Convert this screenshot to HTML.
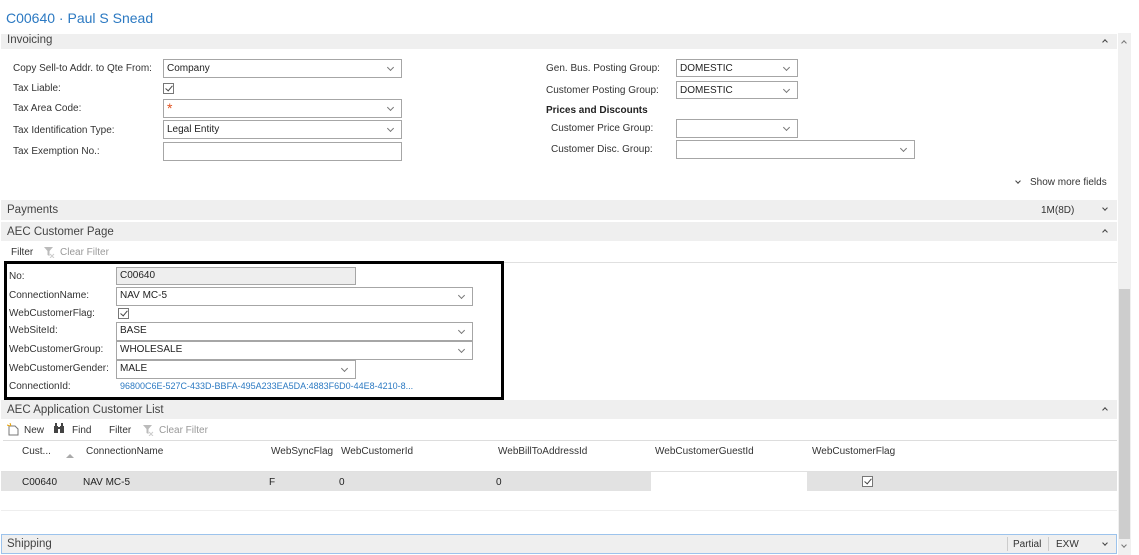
<!DOCTYPE html>
<html><head><meta charset="utf-8"><style>
*{margin:0;padding:0;box-sizing:border-box}
body{width:1139px;height:555px;background:#fff;font-family:"Liberation Sans",sans-serif;font-size:10px;color:#333;position:relative;overflow:hidden}
.a{position:absolute;white-space:nowrap}
.band{position:absolute;left:1px;width:1116px;background:#efefef;font-size:11.5px;color:#444;padding-left:6px}
.inp{position:absolute;border:1px solid #a6a6a6;background:#fff;height:19px;font-size:10px;padding:3px 3px;color:#222}
.dd::after{content:"";position:absolute;right:8px;top:5px;width:4px;height:4px;border-right:1px solid #777;border-bottom:1px solid #777;transform:rotate(45deg)}
.cb{position:absolute;width:11px;height:11px;border:1px solid #777;background:#fff}
.cb::after{content:"";position:absolute;left:3px;top:0px;width:3px;height:6px;border-right:1px solid #444;border-bottom:1px solid #444;transform:rotate(40deg)}
.lbl{position:absolute;font-size:10px;color:#333;white-space:nowrap}
.chev{position:absolute;width:5px;height:5px;border-left:1.5px solid #444;border-top:1.5px solid #444}
.up{transform:rotate(45deg)}.dn{transform:rotate(225deg)}
.hl{position:absolute;height:1px;background:#e0e0e0}
</style></head><body>
<div class="a" style="left:6px;top:10px;font-size:14px;color:#2b79c2">C00640 · Paul S Snead</div>

<div class="band" style="top:34px;height:15px;line-height:13px">Invoicing</div>
<div class="chev up" style="left:1103px;top:40px;width:4px;height:4px"></div>

<div class="lbl" style="left:13px;top:63px">Copy Sell-to Addr. to Qte From:</div>
<div class="inp dd" style="left:163px;top:59px;width:239px">Company</div>
<div class="lbl" style="left:13px;top:83px">Tax Liable:</div>
<div class="cb" style="left:163px;top:83px"></div>
<div class="lbl" style="left:13px;top:103px">Tax Area Code:</div>
<div class="inp dd" style="left:163px;top:99px;width:239px"><span style="color:#e0501e;font-size:14px;line-height:10px">*</span></div>
<div class="lbl" style="left:13px;top:125px">Tax Identification Type:</div>
<div class="inp dd" style="left:163px;top:120px;width:239px">Legal Entity</div>
<div class="lbl" style="left:13px;top:146px">Tax Exemption No.:</div>
<div class="inp" style="left:163px;top:142px;width:239px"></div>

<div class="lbl" style="left:546px;top:63px">Gen. Bus. Posting Group:</div>
<div class="inp dd" style="left:676px;top:59px;width:122px;height:18px;padding-top:3px">DOMESTIC</div>
<div class="lbl" style="left:546px;top:85px">Customer Posting Group:</div>
<div class="inp dd" style="left:676px;top:81px;width:122px;height:18px;padding-top:3px">DOMESTIC</div>
<div class="lbl" style="left:546px;top:105px;font-weight:bold;color:#222">Prices and Discounts</div>
<div class="lbl" style="left:551px;top:123px">Customer Price Group:</div>
<div class="inp dd" style="left:676px;top:119px;width:122px"></div>
<div class="lbl" style="left:551px;top:144px">Customer Disc. Group:</div>
<div class="inp dd" style="left:676px;top:140px;width:239px"></div>

<div class="chev dn" style="left:1016px;top:179px;width:4px;height:4px"></div>
<div class="lbl" style="left:1030px;top:177px">Show more fields</div>

<div class="band" style="top:200px;height:20px;line-height:21px">Payments</div>
<div class="lbl" style="left:1041px;top:205px">1M(8D)</div>
<div class="chev dn" style="left:1103px;top:206px;width:4px;height:4px"></div>
<div class="band" style="top:222px;height:19px;line-height:20px">AEC Customer Page</div>
<div class="chev up" style="left:1103px;top:230px;width:4px;height:4px"></div>

<div class="lbl" style="left:11px;top:247px">Filter</div>
<svg class="a" style="left:43px;top:246px" width="12" height="12"><path d="M1 1h9L6.5 5v5l-2-1V5z" fill="#bbb"/><path d="M7 8l4 4M11 8l-4 4" stroke="#ccc"/></svg>
<div class="lbl" style="left:60px;top:247px;color:#999">Clear Filter</div>
<div class="hl" style="left:503px;top:262px;width:614px"></div>

<div class="a" style="left:4px;top:261px;width:500px;height:139px;border:3px solid #000"></div>
<div class="lbl" style="left:9px;top:271px">No:</div>
<div class="inp" style="left:116px;top:267px;width:240px;background:#eeeeee;height:18px;padding-top:2px">C00640</div>
<div class="lbl" style="left:9px;top:290px">ConnectionName:</div>
<div class="inp dd" style="left:116px;top:287px;width:357px;padding-top:2px">NAV MC-5</div>
<div class="lbl" style="left:9px;top:308px">WebCustomerFlag:</div>
<div class="cb" style="left:118px;top:308px"></div>
<div class="lbl" style="left:9px;top:325px">WebSiteId:</div>
<div class="inp dd" style="left:116px;top:322px;width:357px;padding-top:2px">BASE</div>
<div class="lbl" style="left:9px;top:344px">WebCustomerGroup:</div>
<div class="inp dd" style="left:116px;top:341px;width:357px;padding-top:2px">WHOLESALE</div>
<div class="lbl" style="left:9px;top:363px">WebCustomerGender:</div>
<div class="inp dd" style="left:116px;top:360px;width:240px;padding-top:2px">MALE</div>
<div class="lbl" style="left:9px;top:381px">ConnectionId:</div>
<div class="lbl" style="left:120px;top:381px;color:#2b79c2;font-size:9px">96800C6E-527C-433D-BBFA-495A233EA5DA:4883F6D0-44E8-4210-8...</div>

<div class="band" style="top:400px;height:19px;line-height:20px">AEC Application Customer List</div>
<div class="chev up" style="left:1103px;top:408px;width:4px;height:4px"></div>

<svg class="a" style="left:7px;top:423px" width="12" height="13"><path d="M2 3h6l3 3v6H2z" fill="#fff" stroke="#777"/><path d="M3 0l1 3M0 2l3 1" stroke="#e8a000"/></svg>
<div class="lbl" style="left:24px;top:425px">New</div>
<svg class="a" style="left:53px;top:423px" width="13" height="11"><rect x="1" y="3" width="4" height="7" fill="#444"/><rect x="7" y="3" width="4" height="7" fill="#444"/><rect x="2" y="0" width="2" height="4" fill="#444"/><rect x="8" y="0" width="2" height="4" fill="#444"/><rect x="5" y="4" width="2" height="2" fill="#444"/></svg>
<div class="lbl" style="left:72px;top:425px">Find</div>
<div class="lbl" style="left:109px;top:425px">Filter</div>
<svg class="a" style="left:142px;top:424px" width="12" height="12"><path d="M1 1h9L6.5 5v5l-2-1V5z" fill="#bbb"/><path d="M7 8l4 4M11 8l-4 4" stroke="#ccc"/></svg>
<div class="lbl" style="left:159px;top:425px;color:#999">Clear Filter</div>
<div class="hl" style="left:3px;top:440px;width:1114px;background:#ddd"></div>

<div class="lbl" style="left:22px;top:446px">Cust...</div>
<div class="a" style="left:66px;top:454px;width:0;height:0;border-left:4px solid transparent;border-right:4px solid transparent;border-bottom:4px solid #aaa"></div>
<div class="lbl" style="left:86px;top:446px">ConnectionName</div>
<div class="lbl" style="left:271px;top:446px">WebSyncFlag</div>
<div class="lbl" style="left:341px;top:446px">WebCustomerId</div>
<div class="lbl" style="left:498px;top:446px">WebBillToAddressId</div>
<div class="lbl" style="left:655px;top:446px">WebCustomerGuestId</div>
<div class="lbl" style="left:812px;top:446px">WebCustomerFlag</div>
<div class="hl" style="left:1px;top:471px;width:1116px"></div>
<div class="a" style="left:1px;top:472px;width:1116px;height:19px;background:#e2e2e2"></div>
<div class="a" style="left:651px;top:472px;width:156px;height:19px;background:#fff"></div>
<div class="lbl" style="left:22px;top:477px;color:#222">C00640</div>
<div class="lbl" style="left:83px;top:477px;color:#222">NAV MC-5</div>
<div class="lbl" style="left:269px;top:477px;color:#222">F</div>
<div class="lbl" style="left:339px;top:477px;color:#222">0</div>
<div class="lbl" style="left:496px;top:477px;color:#222">0</div>
<div class="cb" style="left:862px;top:476px"></div>
<div class="hl" style="left:1px;top:510px;width:1116px;background:#eee"></div>

<div class="a" style="left:1px;top:534px;width:1116px;height:20px;background:#efefef;border:1px solid #9cc3ec;font-size:11.5px;color:#444;padding-left:5px;line-height:19px">Shipping</div>
<div class="a" style="left:1007px;top:537px;width:1px;height:14px;background:#ccc"></div>
<div class="lbl" style="left:1013px;top:539px">Partial</div>
<div class="a" style="left:1048px;top:537px;width:1px;height:14px;background:#ccc"></div>
<div class="lbl" style="left:1056px;top:539px">EXW</div>
<div class="chev dn" style="left:1103px;top:541px;width:4px;height:4px"></div>

<div class="a" style="left:1118px;top:33px;width:13px;height:522px;background:#f0f0f0"></div>
<div class="a" style="left:1119px;top:289px;width:11px;height:250px;background:#cdcdcd"></div>
<div class="chev up" style="left:1122px;top:41px;width:4px;height:4px;border-color:#777"></div>
<div class="chev dn" style="left:1122px;top:543px;width:4px;height:4px;border-color:#777"></div>
</body></html>
